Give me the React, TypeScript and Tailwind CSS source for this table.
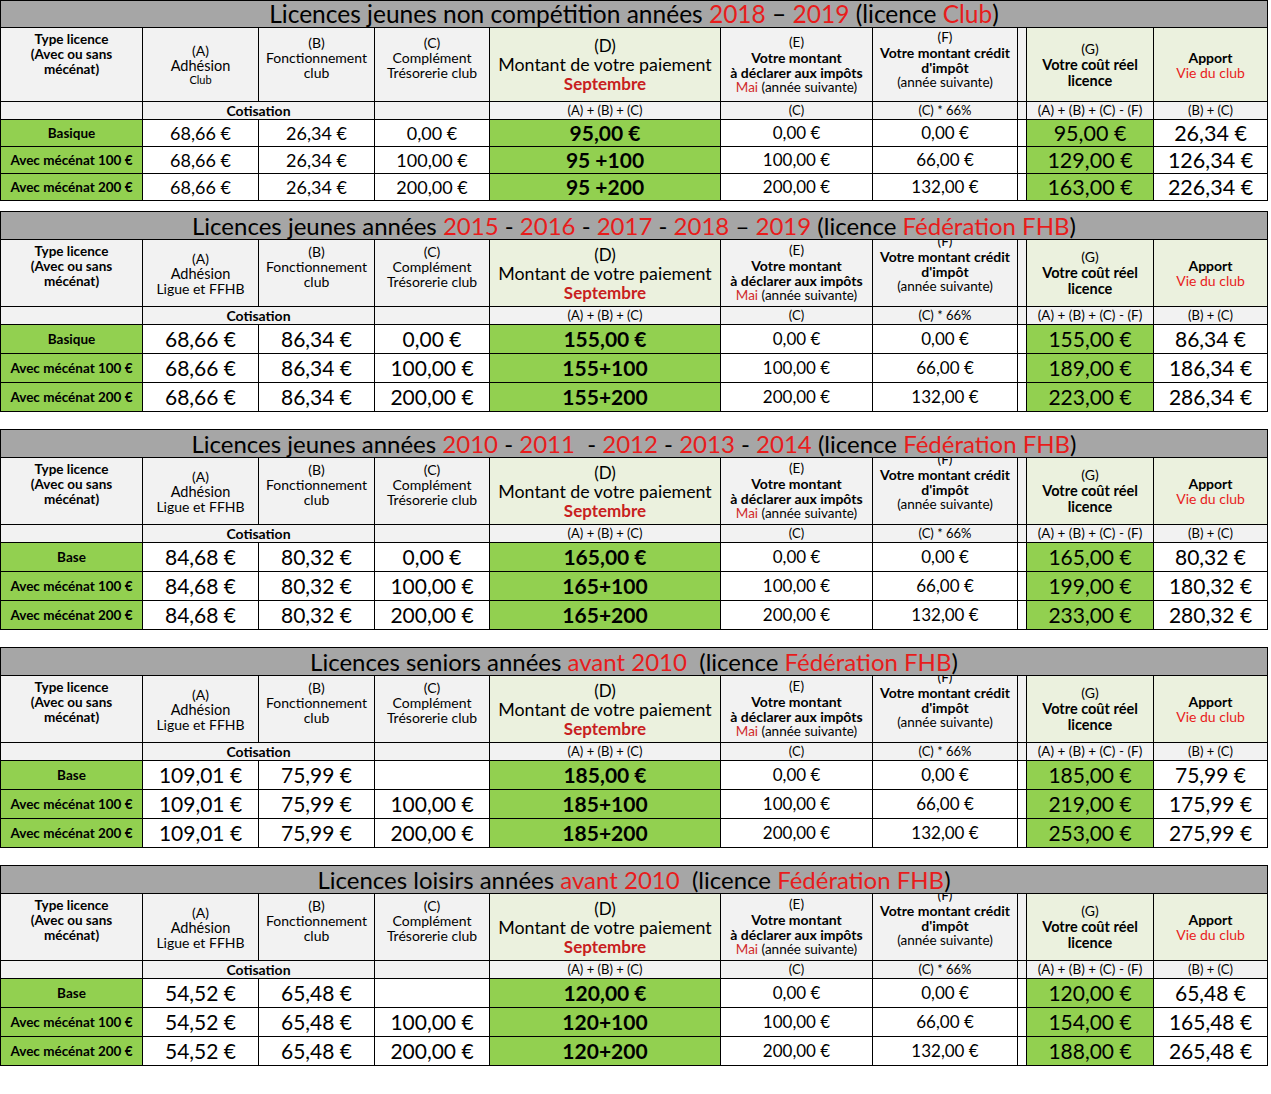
type Seg = [string, boolean?];

type Block = {
  title: Seg[];
  adhesion: string;
  small: boolean;
  rows: {
    label: string;
    a: string;
    b: string;
    c: string;
    d: string;
    e: string;
    f: string;
    g: string;
    h: string;
  }[];
};

const mk = (
  labels: string[],
  a: string,
  b: string,
  c: string[],
  d: string[],
  g: string[],
  h: string[],
) =>
  labels.map((label, i) => ({
    label,
    a,
    b,
    c: c[i],
    d: d[i],
    e: ['0,00 €', '100,00 €', '200,00 €'][i],
    f: ['0,00 €', '66,00 €', '132,00 €'][i],
    g: g[i],
    h: h[i],
  }));

const BASIQUE = ['Basique', 'Avec mécénat 100 €', 'Avec mécénat 200 €'];
const BASE = ['Base', 'Avec mécénat 100 €', 'Avec mécénat 200 €'];

const blocks: Block[] = [
  {
    title: [['Licences jeunes non compétition années '], ['2018', true], [' – '], ['2019', true], [' (licence '], ['Club', true], [')']],
    adhesion: 'Club',
    small: true,
    rows: mk(BASIQUE, '68,66 €', '26,34 €', ['0,00 €', '100,00 €', '200,00 €'], ['95,00 €', '95 +100', '95 +200'], ['95,00 €', '129,00 €', '163,00 €'], ['26,34 €', '126,34 €', '226,34 €']),
  },
  {
    title: [['Licences jeunes années '], ['2015', true], [' - '], ['2016', true], [' - '], ['2017', true], [' - '], ['2018', true], [' – '], ['2019', true], [' (licence '], ['Fédération FHB', true], [')']],
    adhesion: 'Ligue et FFHB',
    small: false,
    rows: mk(BASIQUE, '68,66 €', '86,34 €', ['0,00 €', '100,00 €', '200,00 €'], ['155,00 €', '155+100', '155+200'], ['155,00 €', '189,00 €', '223,00 €'], ['86,34 €', '186,34 €', '286,34 €']),
  },
  {
    title: [['Licences jeunes années '], ['2010', true], [' - '], ['2011', true], ['  - '], ['2012', true], [' - '], ['2013', true], [' - '], ['2014', true], [' (licence '], ['Fédération FHB', true], [')']],
    adhesion: 'Ligue et FFHB',
    small: false,
    rows: mk(BASE, '84,68 €', '80,32 €', ['0,00 €', '100,00 €', '200,00 €'], ['165,00 €', '165+100', '165+200'], ['165,00 €', '199,00 €', '233,00 €'], ['80,32 €', '180,32 €', '280,32 €']),
  },
  {
    title: [['Licences seniors années '], ['avant 2010', true], ['  (licence '], ['Fédération FHB', true], [')']],
    adhesion: 'Ligue et FFHB',
    small: false,
    rows: mk(BASE, '109,01 €', '75,99 €', ['', '100,00 €', '200,00 €'], ['185,00 €', '185+100', '185+200'], ['185,00 €', '219,00 €', '253,00 €'], ['75,99 €', '175,99 €', '275,99 €']),
  },
  {
    title: [['Licences loisirs années '], ['avant 2010', true], ['  (licence '], ['Fédération FHB', true], [')']],
    adhesion: 'Ligue et FFHB',
    small: false,
    rows: mk(BASE, '54,52 €', '65,48 €', ['', '100,00 €', '200,00 €'], ['120,00 €', '120+100', '120+200'], ['120,00 €', '154,00 €', '188,00 €'], ['65,48 €', '165,48 €', '265,48 €']),
  },
];

const cell = 'flex flex-col items-center justify-center border-r border-b border-black text-center overflow-hidden whitespace-nowrap';

function Table({ block }: { block: Block }) {
  const { small } = block;
  const val = small ? 'text-[18px]' : 'text-[21px]';
  const big = small ? 'text-[21.5px]' : 'text-[21px]';
  return (
    <div
      className={`grid w-[1268px] grid-cols-[142px_116px_116px_115px_231px_152px_145px_9px_127px_114px] border-l border-t border-black ${
        small ? 'grid-rows-[27px_74px_18px_27px_27px_27px]' : 'grid-rows-[28px_67px_18px_29px_29px_29px]'
      }`}
    >
      <div
        className={`col-span-10 flex items-center justify-center border-r border-b border-black bg-[#a6a6a6] leading-none whitespace-pre text-black ${
          small ? 'text-[24.5px]' : 'text-[24px]'
        }`}
      >
        {block.title.map(([t, red], i) => (
          <span key={i} className={red ? 'text-[#e81c1c]' : ''}>
            {t}
          </span>
        ))}
      </div>

      {/* header */}
      <div className={`${cell} justify-start! bg-[#f2f2f2] pt-[4px] text-[13.5px] leading-[15px] font-bold`}>
        <span>Type licence</span>
        <span>(Avec ou sans</span>
        <span>mécénat)</span>
      </div>
      <div className={`${cell} bg-[#f2f2f2] text-[14px] leading-[15px]`}>
        <span>(A)</span>
        <span className="text-[14.5px]">Adhésion</span>
        <span className={small ? 'text-[11px] leading-[13px]' : ''}>{block.adhesion}</span>
      </div>
      <div className={`${cell} bg-[#f2f2f2] pb-[14px] text-[14px] leading-[15px]`}>
        <span>(B)</span>
        <span>Fonctionnement</span>
        <span>club</span>
      </div>
      <div className={`${cell} bg-[#f2f2f2] pb-[14px] text-[14px] leading-[15px]`}>
        <span>(C)</span>
        <span>Complément</span>
        <span>Trésorerie club</span>
      </div>
      <div className={`${cell} bg-[#ebf1de] leading-[19px]`}>
        <span className="text-[17px]">(D)</span>
        <span className="text-[17.8px]">Montant de votre paiement</span>
        <span className="text-[17px] font-bold text-[#c8201e]">Septembre</span>
      </div>
      <div className={`${cell} bg-[#f2f2f2] text-[13.5px] leading-[15px]`}>
        <span>(E)</span>
        <span className="font-bold text-[14px]">Votre montant</span>
        <span className="font-bold text-[14px]">à déclarer aux impôts</span>
        <span>
          <span className="text-[#d02a2a]">Mai</span> (année suivante)
        </span>
      </div>
      <div className={`${cell} justify-start! bg-[#f2f2f2] text-[13.5px] leading-[15px]`}>
        <div className={`flex flex-col items-center ${small ? 'mt-[2px]' : '-mt-[6px]'}`}>
          <span>(F)</span>
          <span className="font-bold text-[14px]">Votre montant crédit</span>
          <span className="font-bold text-[14px]">d'impôt</span>
          <span>(année suivante)</span>
        </div>
      </div>
      <div className={`${cell} bg-[#f2f2f2]`} />
      <div className={`${cell} bg-[#ebf1de] text-[14px] leading-[16px]`}>
        <span>(G)</span>
        <span className="font-bold text-[14.5px]">Votre coût réel</span>
        <span className="font-bold text-[14.5px]">licence</span>
      </div>
      <div className={`${cell} bg-[#ebf1de] text-[14px] leading-[15px]`}>
        <span className="font-bold">Apport</span>
        <span className="text-[#e81c1c]">Vie du club</span>
      </div>

      {/* formulas */}
      <div className={`${cell} bg-[#f2f2f2]`} />
      <div className={`${cell} col-span-2 bg-[#f2f2f2] text-[14px] font-bold`}>Cotisation</div>
      <div className={`${cell} bg-[#f2f2f2]`} />
      <div className={`${cell} bg-[#f2f2f2] text-[13px]`}>(A) + (B) + (C)</div>
      <div className={`${cell} bg-[#f2f2f2] text-[13px]`}>(C)</div>
      <div className={`${cell} bg-[#f2f2f2] text-[13px]`}>(C) * 66%</div>
      <div className={`${cell} bg-[#f2f2f2]`} />
      <div className={`${cell} bg-[#f2f2f2] text-[13.5px]`}>(A) + (B) + (C) - (F)</div>
      <div className={`${cell} bg-[#f2f2f2] text-[13px]`}>(B) + (C)</div>

      {block.rows.map((r) => (
        <div key={r.label} className="contents">
          <div className={`${cell} bg-[#92d050] text-[13.5px] font-bold`}>{r.label}</div>
          <div className={`${cell} bg-white ${val}`}>{r.a}</div>
          <div className={`${cell} bg-white ${val}`}>{r.b}</div>
          <div className={`${cell} bg-white ${val}`}>{r.c}</div>
          <div className={`${cell} bg-[#92d050] text-[21px] font-bold`}>{r.d}</div>
          <div className={`${cell} bg-white text-[17px]`}>{r.e}</div>
          <div className={`${cell} bg-white text-[17px]`}>{r.f}</div>
          <div className={`${cell} bg-white`} />
          <div className={`${cell} bg-[#92d050] ${big}`}>{r.g}</div>
          <div className={`${cell} bg-white ${big}`}>{r.h}</div>
        </div>
      ))}
    </div>
  );
}

export default function App() {
  return (
    <div className="min-h-[1094px] w-[1271px] bg-white font-[Lato,'Liberation_Sans',sans-serif] text-black">
      <div className="flex flex-col">
        <Table block={blocks[0]} />
        <div className="mt-[10px]">
          <Table block={blocks[1]} />
        </div>
        {blocks.slice(2).map((b, i) => (
          <div key={i} className="mt-[17px]">
            <Table block={b} />
          </div>
        ))}
      </div>
    </div>
  );
}
